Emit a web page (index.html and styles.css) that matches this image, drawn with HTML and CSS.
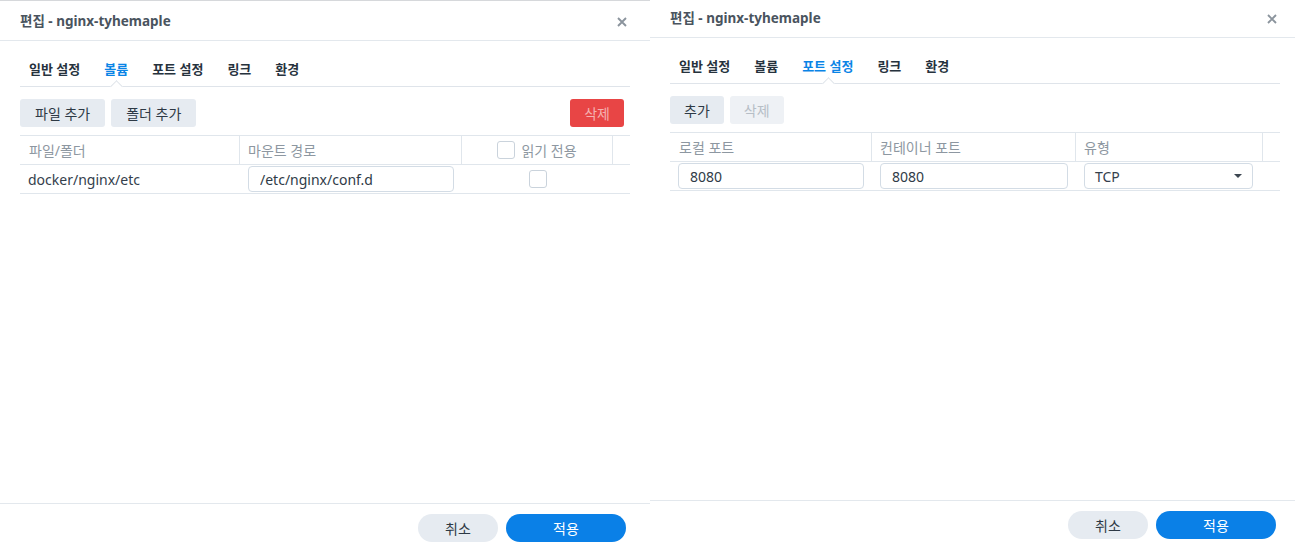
FILE: index.html
```html
<!DOCTYPE html>
<html lang="ko">
<head>
  <meta charset="UTF-8">
  <meta name="viewport" content="width=device-width, initial-scale=1.0">
  <title>편집 - nginx-tyhemaple</title>
  <link rel="stylesheet" href="styles.css">
</head>
<body>
  <div class="screen">

    <!-- 볼륨 탭 -->
    <section class="dialog dialog-under">
      <header class="dialog-head">
        <span class="dialog-title">편집 - nginx-tyhemaple</span>
        <span class="close-btn">
          <svg width="10" height="10" viewBox="0 0 10 10"><path d="M1 1L9 9M9 1L1 9" stroke="#8b949d" stroke-width="1.9" fill="none"/></svg>
        </span>
      </header>
      <div class="dialog-body">
        <nav class="tabs">
          <span class="tab">일반 설정</span>
          <span class="tab active">볼륨</span>
          <span class="tab">포트 설정</span>
          <span class="tab">링크</span>
          <span class="tab">환경</span>
        </nav>
        <div class="toolbar">
          <button class="btn">파일 추가</button>
          <button class="btn">폴더 추가</button>
          <button class="btn btn-short btn-danger">삭제</button>
        </div>
        <div class="grid grid-volume">
          <div class="th">파일/폴더</div>
          <div class="th">마운트 경로</div>
          <div class="th center"><span class="check"></span>읽기 전용</div>
          <div class="th"></div>
          <div class="td">docker/nginx/etc</div>
          <div class="td"><input class="field" type="text" value="/etc/nginx/conf.d"></div>
          <div class="td center"><span class="check"></span></div>
          <div class="td"></div>
        </div>
      </div>
      <footer class="dialog-foot">
        <button class="pill">취소</button>
        <button class="pill pill-primary">적용</button>
      </footer>
    </section>

    <!-- 포트 설정 탭 -->
    <section class="dialog">
      <header class="dialog-head">
        <span class="dialog-title">편집 - nginx-tyhemaple</span>
        <span class="close-btn">
          <svg width="10" height="10" viewBox="0 0 10 10"><path d="M1 1L9 9M9 1L1 9" stroke="#8b949d" stroke-width="1.9" fill="none"/></svg>
        </span>
      </header>
      <div class="dialog-body">
        <nav class="tabs">
          <span class="tab">일반 설정</span>
          <span class="tab">볼륨</span>
          <span class="tab active">포트 설정</span>
          <span class="tab">링크</span>
          <span class="tab">환경</span>
        </nav>
        <div class="toolbar">
          <button class="btn btn-short">추가</button>
          <button class="btn btn-short" disabled>삭제</button>
        </div>
        <div class="grid grid-port">
          <div class="th">로컬 포트</div>
          <div class="th">컨테이너 포트</div>
          <div class="th">유형</div>
          <div class="th"></div>
          <div class="td"><input class="field" type="text" value="8080"></div>
          <div class="td"><input class="field" type="text" value="8080"></div>
          <div class="td">
            <div class="select"><span>TCP</span><span class="caret"></span></div>
          </div>
          <div class="td"></div>
        </div>
      </div>
      <footer class="dialog-foot">
        <button class="pill">취소</button>
        <button class="pill pill-primary">적용</button>
      </footer>
    </section>

  </div>
</body>
</html>
```

FILE: styles.css
```css
body {
  margin: 0;
  overflow: hidden;
  background: #fff;
  font-family: "Noto Sans", "Noto Sans CJK KR", sans-serif;
  font-size: 14px;
  color: #2f3b47;
}

.screen {
  display: flex;
  width: 1295px;
  overflow: hidden;
}

.dialog {
  flex-shrink: 0;
  width: 650px;
  height: 549px;
  display: flex;
  flex-direction: column;
  background: #fff;
}

/* 뒤쪽 창은 3px 아래에 있음 */
.dialog-under {
  border-top: 1px solid #d6d8db;
  padding-top: 2px;
}

.dialog-head {
  height: 38px;
  box-sizing: border-box;
  padding: 0 23px 3px 20px;
  border-bottom: 1px solid #e3e8ed;
  display: flex;
  align-items: center;
  justify-content: space-between;
}

.dialog-title {
  font-weight: 700;
  font-size: 13.5px;
  color: #4a545e;
}

.close-btn {
  display: flex;
  margin-top: 3px;
}

.dialog-body {
  flex: 1;
  padding: 0 20px;
}

.tabs {
  display: flex;
  border-bottom: 1px solid #dfe4ea;
}

.tab {
  position: relative;
  padding: 18px 12px 7px;
  line-height: 20px;
  font-size: 13px;
  font-weight: 700;
  color: #26323d;
}

.tab:first-child {
  padding-left: 9px;
}

.tab.active {
  color: #0a84e6;
}

.tab.active::after {
  content: "";
  position: absolute;
  left: 50%;
  bottom: -5px;
  width: 8px;
  height: 8px;
  margin-left: -4px;
  background: #fff;
  border-left: 1px solid #dfe4ea;
  border-top: 1px solid #dfe4ea;
  transform: rotate(45deg);
}

.toolbar {
  display: flex;
  gap: 6px;
  margin-top: 12px;
}

.btn {
  height: 28px;
  padding: 0 15px;
  border: none;
  border-radius: 3px;
  background: #e6ebf1;
  font-family: inherit;
  font-size: 14px;
  color: #2d3945;
}

.btn-short {
  padding: 0 14px;
}

.btn:disabled {
  background: #eef1f5;
  color: #b6bec6;
}

.btn-danger {
  margin-left: auto;
  margin-right: 6px;
  background: #e84545;
  color: #f5b1b1;
}

.grid {
  display: grid;
  margin-top: 8px;
  border-top: 1px solid #e0e6ec;
}

.grid-volume {
  grid-template-columns: 220px 222px 151px 1fr;
}

.grid-port {
  grid-template-columns: 202px 204px 187px 1fr;
}

.th,
.td {
  height: 29px;
  box-sizing: border-box;
  padding: 0 8px;
  border-bottom: 1px solid #e0e6ec;
  display: flex;
  align-items: center;
}

.th {
  color: #8d97a1;
}

.th:not(:nth-child(4)) {
  border-right: 1px solid #e0e6ec;
}

.th.center,
.td.center {
  justify-content: center;
}

.td {
  color: #34404c;
}

.td:first-child,
.th:first-child {
  padding-left: 9px;
}

.check {
  display: inline-block;
  width: 18px;
  height: 18px;
  box-sizing: border-box;
  border: 1px solid #cad3dc;
  border-radius: 3px;
  background: #fff;
}

.th .check {
  margin-right: 6px;
}

.field {
  width: 100%;
  height: 26px;
  box-sizing: border-box;
  padding: 0 11px;
  border: 1px solid #d3dce5;
  border-radius: 4px;
  font-family: inherit;
  font-size: 14px;
  color: #2f3b47;
}

.select {
  width: 169px;
  height: 26px;
  box-sizing: border-box;
  padding: 0 10px;
  border: 1px solid #d3dce5;
  border-radius: 4px;
  display: flex;
  align-items: center;
  justify-content: space-between;
}

.caret {
  width: 0;
  height: 0;
  border-left: 4px solid transparent;
  border-right: 4px solid transparent;
  border-top: 4px solid #3c4651;
}

.dialog-foot {
  display: flex;
  justify-content: flex-end;
  gap: 8px;
  padding: 10px 24px;
  border-top: 1px solid #e3e8ed;
}

.pill {
  width: 80px;
  height: 28px;
  border: none;
  border-radius: 14px;
  background: #e6ebf1;
  font-family: inherit;
  font-size: 14px;
  color: #2d3945;
}

.pill-primary {
  width: 120px;
  background: #0a80e7;
  color: #fff;
}
```
